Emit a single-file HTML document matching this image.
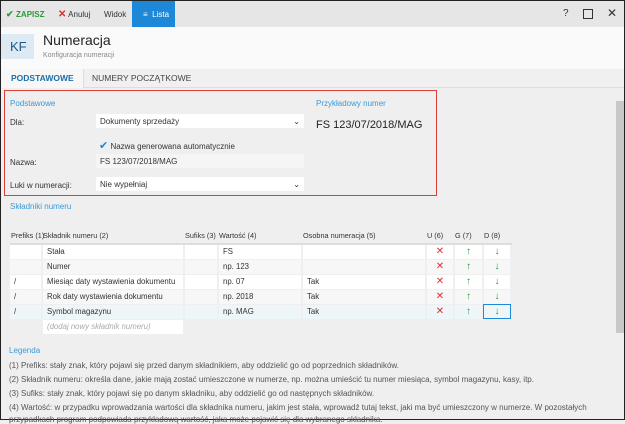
<!DOCTYPE html><html><head><meta charset="utf-8"><style>
*{box-sizing:border-box;margin:0;padding:0}
body{width:625px;height:420px;overflow:hidden;font-family:"Liberation Sans",sans-serif;font-size:8px;color:#333;background:#efefef;position:relative;border:1px solid #222}
.a{position:absolute;white-space:nowrap}
.tb{left:0;top:0;width:623px;height:26px;background:#e6e6e6}
.hd{left:0;top:26px;width:623px;height:42px;background:#fafafa}
.tabs{left:0;top:68px;width:623px;height:19px;background:#f0f0f0;border-bottom:1px solid #ddd}
.inp{background:#fff;height:14px;padding:3px 4px;font-size:8px}
.blue{color:#3a9ad9}
table{table-layout:fixed;border-collapse:collapse}
td{height:15px;font-size:7.8px;padding:0 4px;border-right:2px solid #efefef;border-bottom:1px solid #efefef;background:#fff;white-space:nowrap;overflow:hidden}
tr.g td{background:#f7f7f7}
tr.s td{background:#eef6f9}
.c{text-align:center;padding:0}
.x{color:#e03030;font-size:10px}
.up{color:#2a9a3a;font-weight:bold;font-size:10px}
th{font-weight:normal;text-align:left;font-size:7.3px;padding:0 1px;height:16px;border-bottom:2px solid #ddd;white-space:nowrap;overflow:visible}
.lg{font-size:8px;color:#555;left:8px}
</style></head><body>
<div class="a tb"></div>
<div class="a" style="left:5px;top:8px;color:#2a9a3a;font-size:9px;font-weight:bold">✔ <span style="font-size:8px">ZAPISZ</span></div>
<div class="a" style="left:57px;top:8px;font-size:8px"><span style="color:#e03030;font-weight:bold;font-size:10px">✕</span> Anuluj</div>
<div class="a" style="left:103px;top:9px">Widok</div>
<div class="a" style="left:131px;top:0;width:43px;height:26px;background:#1e88d8;color:#fff;padding:9px 0 0 11px">≡&nbsp; Lista</div>
<div class="a" style="left:562px;top:7px;font-size:10px">?</div>
<div class="a" style="left:582px;top:8px;width:10px;height:10px;border:1.5px solid #333"></div>
<div class="a" style="left:606px;top:5px;font-size:12px">✕</div>
<div class="a hd"></div>
<div class="a" style="left:0;top:33px;width:33px;height:25px;background:#ddeaf3;color:#1a5a8a;font-size:13px;padding:5px 0 0 9px">KF</div>
<div class="a" style="left:42px;top:31px;font-size:14px;color:#222">Numeracja</div>
<div class="a" style="left:42px;top:51px;font-size:7px;color:#888">Konfiguracja numeracji</div>
<div class="a tabs"></div>
<div class="a" style="left:0;top:68px;width:83px;height:19px;background:#f7f7f7;border-right:1px solid #ddd"></div>
<div class="a" style="left:10px;top:72px;font-size:8.5px;font-weight:bold;color:#1d6fa8">PODSTAWOWE</div>
<div class="a" style="left:91px;top:72px;font-size:8.5px;color:#444">NUMERY POCZĄTKOWE</div>
<div class="a" style="left:3px;top:89px;width:433px;height:106px;border:1px solid #d9403a"></div>
<div class="a blue" style="left:9px;top:98px">Podstawowe</div>
<div class="a" style="left:9px;top:117px">Dla:</div>
<div class="a inp" style="left:95px;top:113px;width:208px">Dokumenty sprzedaży<span style="float:right">⌄</span></div>
<div class="a" style="left:98px;top:138px;font-size:8px"><span style="color:#1e88d8;font-size:11px">✔</span> Nazwa generowana automatycznie</div>
<div class="a" style="left:9px;top:157px">Nazwa:</div>
<div class="a inp" style="left:95px;top:153px;width:208px;background:#f5f5f5">FS 123/07/2018/MAG</div>
<div class="a" style="left:9px;top:180px">Luki w numeracji:</div>
<div class="a inp" style="left:95px;top:176px;width:208px">Nie wypełniaj<span style="float:right">⌄</span></div>
<div class="a blue" style="left:315px;top:98px">Przykładowy numer</div>
<div class="a" style="left:315px;top:118px;font-size:11px;color:#222">FS 123/07/2018/MAG</div>
<div class="a blue" style="left:9px;top:201px">Składniki numeru</div>
<div class="a" style="left:615px;top:100px;width:8px;height:232px;background:#c8c8c8"></div>
<table class="a" style="left:9px;top:227px;width:501px">
<colgroup><col style="width:32px"><col style="width:142px"><col style="width:34px"><col style="width:84px"><col style="width:124px"><col style="width:28px"><col style="width:29px"><col style="width:28px"></colgroup>
<tr><th>Prefiks (1)</th><th>Składnik numeru (2)</th><th>Sufiks (3)</th><th>Wartość (4)</th><th>Osobna numeracja (5)</th><th>U (6)</th><th>G (7)</th><th>D (8)</th></tr>
<tr><td></td><td>Stała</td><td></td><td>FS</td><td></td><td class="c x">✕</td><td class="c up">↑</td><td class="c up">↓</td></tr>
<tr class="g"><td></td><td>Numer</td><td></td><td>np. 123</td><td></td><td class="c x">✕</td><td class="c up">↑</td><td class="c up">↓</td></tr>
<tr><td>/</td><td>Miesiąc daty wystawienia dokumentu</td><td></td><td>np. 07</td><td>Tak</td><td class="c x">✕</td><td class="c up">↑</td><td class="c up">↓</td></tr>
<tr class="g"><td>/</td><td>Rok daty wystawienia dokumentu</td><td></td><td>np. 2018</td><td>Tak</td><td class="c x">✕</td><td class="c up">↑</td><td class="c up">↓</td></tr>
<tr class="s"><td>/</td><td>Symbol magazynu</td><td></td><td>np. MAG</td><td>Tak</td><td class="c x">✕</td><td class="c up">↑</td><td class="c up" style="outline:1px solid #1e88d8;outline-offset:-1px">↓</td></tr>
<tr><td style="background:#efefef"></td><td style="color:#aaa;font-style:italic">(dodaj nowy składnik numeru)</td><td style="background:#efefef;border:0" colspan="6"></td></tr>
</table>
<div class="a blue" style="left:8px;top:345px;font-size:8px">Legenda</div>
<div class="a lg" style="top:360px">(1) Prefiks: stały znak, który pojawi się przed danym składnikiem, aby oddzielić go od poprzednich składników.</div>
<div class="a lg" style="top:374px">(2) Składnik numeru: określa dane, jakie mają zostać umieszczone w numerze, np. można umieścić tu numer miesiąca, symbol magazynu, kasy, itp.</div>
<div class="a lg" style="top:388px">(3) Sufiks: stały znak, który pojawi się po danym składniku, aby oddzielić go od następnych składników.</div>
<div class="a lg" style="top:402px">(4) Wartość: w przypadku wprowadzania wartości dla składnika numeru, jakim jest stała,  wprowadź tutaj tekst, jaki ma być umieszczony  w numerze. W pozostałych</div>
<div class="a lg" style="top:414px">przypadkach program podpowiada przykładową wartość, jaka może pojawić się dla wybranego składnika.</div>
</body></html>
